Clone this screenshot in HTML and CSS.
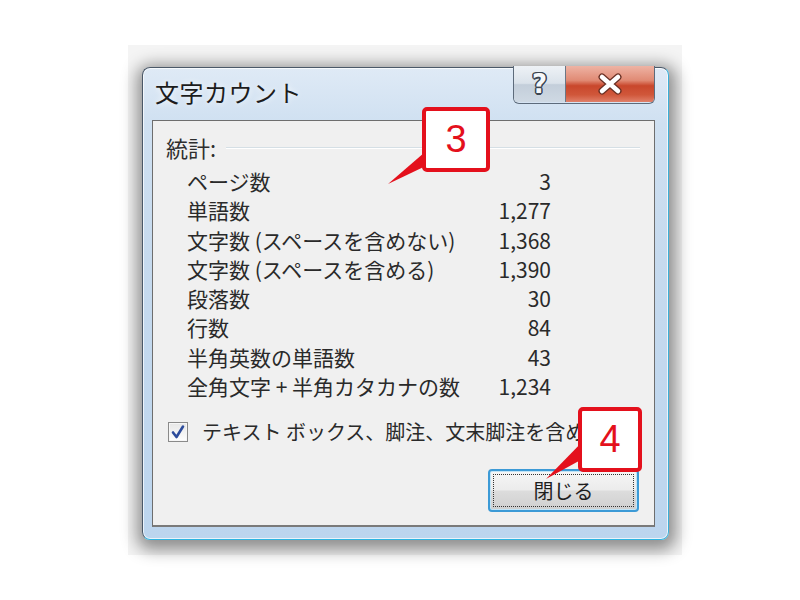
FILE: index.html
```html
<!DOCTYPE html>
<html lang="ja">
<head>
<meta charset="utf-8">
<title>文字カウント</title>
<link rel="stylesheet" href="styles.css">
</head>
<body>
<div class="stage">
  <div class="window">
    <div class="titlebar">
      <div class="title">文字カウント</div>
      <div class="caption-buttons">
        <div class="cbtn help">?</div>
        <div class="cbtn close">
          <svg width="28" height="22" viewBox="0 0 28 22"><path d="M6 4 L22 18 M22 4 L6 18" stroke="#6a3024" stroke-width="7" stroke-linecap="round"/><path d="M6 4 L22 18 M22 4 L6 18" stroke="#ffffff" stroke-width="4.5" stroke-linecap="round"/></svg>
        </div>
      </div>
    </div>
    <div class="panel">
      <div class="group-head">
        <span class="group-label">統計:</span>
        <span class="group-line"></span>
      </div>
      <div class="stats">
        <span class="lbl">ページ数</span><span class="num">3</span>
        <span class="lbl">単語数</span><span class="num">1,277</span>
        <span class="lbl">文字数 (スペースを含めない)</span><span class="num">1,368</span>
        <span class="lbl">文字数 (スペースを含める)</span><span class="num">1,390</span>
        <span class="lbl">段落数</span><span class="num">30</span>
        <span class="lbl">行数</span><span class="num">84</span>
        <span class="lbl">半角英数の単語数</span><span class="num">43</span>
        <span class="lbl">全角文字 + 半角カタカナの数</span><span class="num">1,234</span>
      </div>
      <div class="check-row">
        <span class="checkbox">
          <svg width="16" height="16" viewBox="0 0 16 16"><path d="M3 8.5 L6.5 13 L13 2.5" fill="none" stroke="#2d4c9c" stroke-width="2.6" stroke-linejoin="round" stroke-linecap="round"/></svg>
        </span>
        <span class="check-text">テキスト ボックス、脚注、文末脚注を含める</span>
      </div>
      <div class="button-row">
        <div class="push"><span class="focus">閉じる</span></div>
      </div>
    </div>
  </div>
  <svg class="pointers" width="800" height="600" viewBox="0 0 800 600">
    <polygon points="432,146 432,163 388,184" fill="#e4101c"/>
    <polygon points="588,436 588,456 546,479" fill="#e4101c"/>
  </svg>
  <div class="callout c3">3</div>
  <div class="callout c4">4</div>
</div>
</body>
</html>
```
FILE: styles.css
```css
html, body {
  margin: 0;
  padding: 0;
  background: #ffffff;
}
body {
  width: 800px;
  height: 600px;
  overflow: hidden;
  font-family: "Noto Sans CJK JP", "Noto Sans", sans-serif;
  color: #1e1e1e;
}
.stage {
  margin: 45px 0 0 128px;
  width: 554px;
  height: 510px;
  background: #f4f4f4;
  padding-top: 22px;
  padding-left: 14px;
  box-sizing: border-box;
}
.window {
  width: 527px;
  height: 473px;
  box-sizing: border-box;
  border: 1px solid #4a5868;
  border-right-color: #3aaed8;
  border-bottom-color: #2fb4e0;
  border-radius: 8px;
  background: linear-gradient(180deg, #dfeaf6 0%, #cfe0f1 12%, #c6daee 40%, #bcd5ee 100%);
  box-shadow: 1px 4px 16px 6px rgba(0,0,0,0.42), inset 0 0 0 1px rgba(255,255,255,0.7);
  display: flex;
  flex-direction: column;
}
.titlebar {
  height: 52px;
  display: flex;
  justify-content: space-between;
  align-items: flex-start;
  flex: none;
}
.title {
  margin: 9px 0 0 12px;
  font-size: 24px;
  line-height: 30px;
  color: #1c1c1c;
  text-shadow: 0 0 6px rgba(255,255,255,0.9);
  letter-spacing: 0.5px;
}
.caption-buttons {
  display: flex;
  margin: -2px 13px 0 0;
  height: 37px;
  border: 1px solid #5d6b7b;
  border-top: none;
  border-radius: 0 0 6px 6px;
  overflow: hidden;
}
.cbtn {
  height: 36px;
  display: flex;
  align-items: center;
  justify-content: center;
}
.help {
  width: 51px;
  background: linear-gradient(180deg, #eef2f6 0%, #dae2ea 48%, #c3ceda 52%, #cfd9e3 100%);
  border-right: 1px solid #6b7785;
  font-family: "DejaVu Sans", sans-serif;
  font-weight: bold;
  font-size: 26px;
  line-height: 36px;
  color: #f6f8fa;
  text-shadow: 1.5px 0 0 #3c4652, -1.5px 0 0 #3c4652, 0 1.5px 0 #3c4652, 0 -1.5px 0 #3c4652,
    1px 1px 0 #3c4652, -1px -1px 0 #3c4652, 1px -1px 0 #3c4652, -1px 1px 0 #3c4652;
}
.close {
  width: 88px;
  background: linear-gradient(180deg, #eeb3a4 0%, #e08a74 40%, #c9472c 55%, #d0573a 80%, #e0806a 100%);
}
.panel {
  flex: 1;
  margin: 0 13px 12px 9px;
  background: #f0f0f0;
  border: 1px solid #6e6e6e;
  border-bottom: 2px solid #7a7a7a;
  display: flex;
  flex-direction: column;
  padding: 11px 14px 15px 13px;
}
.group-head {
  display: flex;
  align-items: center;
  height: 30px;
}
.group-label {
  font-size: 22px;
  line-height: 30px;
  color: #2e2e2e;
}
.group-line {
  flex: 1;
  height: 0;
  border-top: 1px solid #d5dfe5;
  border-bottom: 1px solid #ffffff;
  margin: 2px 0 0 10px;
}
.stats {
  display: grid;
  grid-template-columns: 1fr auto;
  grid-auto-rows: 29.3px;
  width: 364px;
  margin: 5px 0 0 21px;
  font-size: 21px;
  line-height: 29.3px;
  color: #2a2a2a;
}
.num {
  text-align: right;
}
.check-row {
  display: flex;
  align-items: center;
  height: 30px;
  margin-top: 16px;
  margin-left: 2px;
}
.checkbox {
  width: 18px;
  height: 18px;
  flex: none;
  border: 1px solid #8a8a8a;
  background: linear-gradient(180deg, #e6e6e6, #ffffff);
  display: flex;
  align-items: center;
  justify-content: center;
  box-shadow: inset 0 0 0 1px #f6f6f6;
}
.check-text {
  margin-left: 14px;
  font-size: 20px;
  line-height: 30px;
  color: #2a2a2a;
  white-space: nowrap;
}
.button-row {
  margin-top: auto;
  display: flex;
  justify-content: flex-end;
  padding-right: 3px;
}
.push {
  width: 141px;
  height: 33px;
  border: 2px solid #3c9ad6;
  border-radius: 4px;
  background: linear-gradient(180deg, #f6f6f6 0%, #ececec 48%, #dcdcdc 52%, #cfcfcf 100%);
  box-shadow: inset 0 0 0 1px #c0e4f7;
  display: flex;
  padding: 3px;
  box-sizing: content-box;
  margin: -2px;
}
.focus {
  flex: 1;
  border: 1px dotted #333333;
  display: flex;
  align-items: center;
  justify-content: center;
  font-size: 20px;
  color: #1e1e1e;
}
.pointers {
  position: absolute;
  left: 0;
  top: 0;
  pointer-events: none;
}
.callout {
  position: absolute;
  box-sizing: border-box;
  border: 4px solid #e4101c;
  border-radius: 5px;
  background: #ffffff;
  color: #e4101c;
  font-family: "Liberation Sans", Arial, sans-serif;
  font-size: 38px;
  display: flex;
  align-items: center;
  justify-content: center;
}
.c3 {
  left: 422px;
  top: 107px;
  width: 68px;
  height: 65px;
}
.c4 {
  left: 578px;
  top: 407px;
  width: 64px;
  height: 65px;
}
```
